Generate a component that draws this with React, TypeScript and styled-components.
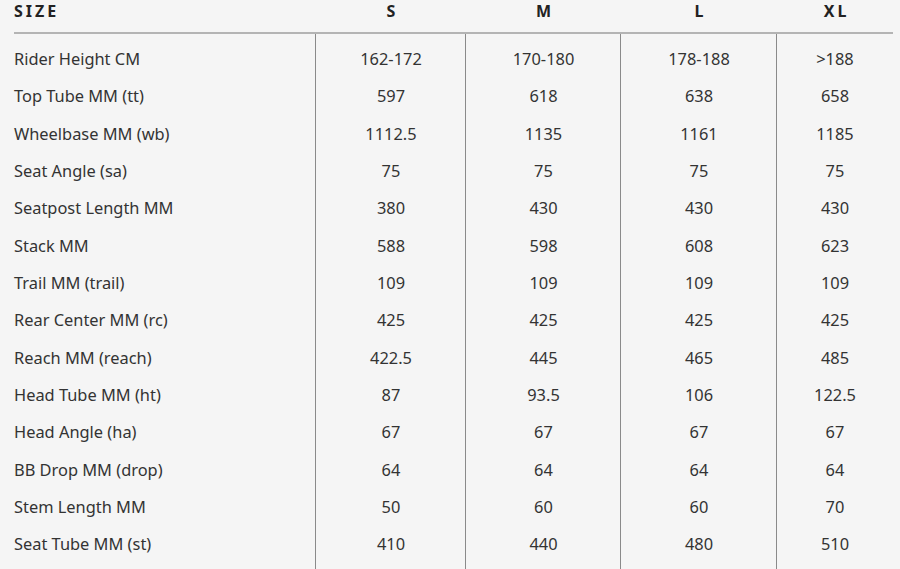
import React from "react";
import styled, { createGlobalStyle } from "styled-components";

const Global = createGlobalStyle`
  html, body { margin: 0; padding: 0; background: #f5f5f5; }
  body { font-family: "Noto Sans", "Liberation Sans", sans-serif; color: #333; }
`;

const Table = styled.div`
  display: flex;
  padding-left: 14px;
  width: 879px;
  height: 569px;
  overflow: hidden;
`;

const Column = styled.div<{ $w: number }>`
  width: ${(p) => p.$w}px;
  flex: none;
  display: flex;
  flex-direction: column;
`;

const Head = styled.div<{ $label?: boolean }>`
  height: 32px;
  border-bottom: 2px solid #b4b4b4;
  font-weight: 700;
  font-size: 16px;
  letter-spacing: 3px;
  line-height: 22px;
  color: #222;
  text-align: ${(p) => (p.$label ? "left" : "center")};
  padding-left: ${(p) => (p.$label ? "0" : "3px")};
`;

const Body = styled.div<{ $label?: boolean }>`
  flex: 1;
  padding-top: 6px;
  border-left: ${(p) => (p.$label ? "none" : "1.5px solid #8a8a8a")};
  margin-left: ${(p) => (p.$label ? "0" : "-1px")};
`;

const Cell = styled.div<{ $label?: boolean }>`
  height: 37.35px;
  line-height: 37.35px;
  font-size: 16.4px;
  white-space: nowrap;
  text-align: ${(p) => (p.$label ? "left" : "center")};
`;

const labels = [
  "Rider Height CM",
  "Top Tube MM (tt)",
  "Wheelbase MM (wb)",
  "Seat Angle (sa)",
  "Seatpost Length MM",
  "Stack MM",
  "Trail MM (trail)",
  "Rear Center MM (rc)",
  "Reach MM (reach)",
  "Head Tube MM (ht)",
  "Head Angle (ha)",
  "BB Drop MM (drop)",
  "Stem Length MM",
  "Seat Tube MM (st)",
];

const sizes: { name: string; width: number; values: string[] }[] = [
  { name: "S", width: 150, values: ["162-172", "597", "1112.5", "75", "380", "588", "109", "425", "422.5", "87", "67", "64", "50", "410"] },
  { name: "M", width: 155, values: ["170-180", "618", "1135", "75", "430", "598", "109", "425", "445", "93.5", "67", "64", "60", "440"] },
  { name: "L", width: 156, values: ["178-188", "638", "1161", "75", "430", "608", "109", "425", "465", "106", "67", "64", "60", "480"] },
  { name: "XL", width: 116, values: [">188", "658", "1185", "75", "430", "623", "109", "425", "485", "122.5", "67", "64", "70", "510"] },
];

export default function App() {
  return (
    <>
      <Global />
      <Table>
        <Column $w={302}>
          <Head $label>SIZE</Head>
          <Body $label>
            {labels.map((l) => (
              <Cell $label key={l}>{l}</Cell>
            ))}
          </Body>
        </Column>
        {sizes.map((s) => (
          <Column $w={s.width} key={s.name}>
            <Head>{s.name}</Head>
            <Body>
              {s.values.map((v, i) => (
                <Cell key={i}>{v}</Cell>
              ))}
            </Body>
          </Column>
        ))}
      </Table>
    </>
  );
}
